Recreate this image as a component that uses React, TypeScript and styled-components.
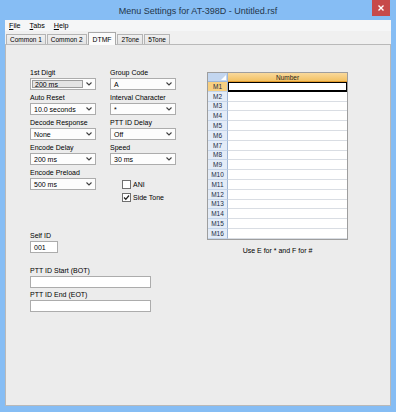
import React from "react";
import styled, { createGlobalStyle, css } from "styled-components";

const GlobalStyle = createGlobalStyle`
  html, body {
    margin: 0;
    padding: 0;
  }
  body {
    width: 396px;
    height: 412px;
    overflow: hidden;
    font-family: "Liberation Sans", Arial, sans-serif;
    color: #000;
  }
`;

const Window = styled.div`
  width: 396px;
  height: 412px;
  background: #86bdf4;
  display: flex;
  flex-direction: column;
`;

const TitleBar = styled.div`
  height: 20px;
  display: grid;
  grid-template-columns: 1fr auto 1fr;
  align-items: center;
  font-size: 9px;
  color: #24364a;
`;

const Title = styled.div`
  grid-column: 2;
  padding-top: 1px;
`;

const CloseButton = styled.div`
  grid-column: 3;
  justify-self: end;
  align-self: start;
  width: 18px;
  height: 16px;
  margin-right: 6px;
  background: #c74a4a;
  display: flex;
  align-items: center;
  justify-content: center;
`;

const Frame = styled.div`
  flex: 1;
  display: flex;
  flex-direction: column;
  padding: 0 5px 6px 5px;
  min-height: 0;
`;

const Client = styled.div`
  flex: 1;
  display: flex;
  flex-direction: column;
  background: #f0f0f0;
`;

const MenuBar = styled.div`
  height: 11px;
  display: flex;
  align-items: center;
  gap: 9px;
  padding-left: 4px;
  background: #f5f6f7;
  font-size: 7.2px;
`;

const MenuItem = styled.span`
  &::first-letter {
    text-decoration: underline;
  }
`;

const TabStrip = styled.div`
  height: 13px;
  display: flex;
  align-items: flex-end;
  gap: 1px;
  padding-left: 1px;
  background: #f0f0f0;
`;

const Tab = styled.div<{ $active?: boolean }>`
  height: 9px;
  padding: 0 3px;
  display: flex;
  align-items: center;
  font-size: 6.5px;
  border: 1px solid #b4b4b4;
  border-bottom: none;
  background: linear-gradient(#f0f0f0, #e3e3e3);
  ${(p) =>
    p.$active &&
    css`
      height: 12px;
      padding: 0 4px;
      background: #fbfbfb;
      position: relative;
      z-index: 1;
      margin-bottom: -1px;
      border-color: #a9a9a9;
      font-size: 6.8px;
    `}
`;

const Panel = styled.div`
  flex: 1;
  border: 1px solid #b9b9b9;
  background: #ececec;
  display: flex;
  align-items: flex-start;
  padding: 24px 0 0 24px;
`;

const FormColumn = styled.div`
  display: flex;
  flex-direction: column;
`;

const FieldGrid = styled.div`
  display: grid;
  grid-template-columns: 66px 66px;
  column-gap: 14px;
  row-gap: 4px;
  align-items: start;
`;

const Field = styled.div<{ $top?: number }>`
  display: flex;
  flex-direction: column;
  gap: 1px;
  margin-top: ${(p) => p.$top ?? 0}px;
`;

const Label = styled.div`
  font-size: 7px;
  line-height: 8px;
  white-space: nowrap;
`;

const Combo = styled.div`
  height: 12px;
  box-sizing: border-box;
  border: 1px solid #acacac;
  background: #fdfdfd;
  display: flex;
  align-items: stretch;
`;

const ComboText = styled.div<{ $focused?: boolean }>`
  flex: 1;
  display: flex;
  align-items: center;
  padding-left: 3px;
  font-size: 7px;
  white-space: nowrap;
  ${(p) =>
    p.$focused &&
    css`
      margin: 1px 0 1px 1px;
      padding-left: 2px;
      background: #e4e4e4;
      border: 1px solid #9c9c9c;
    `}
`;

const ComboArrow = styled.div`
  width: 12px;
  display: flex;
  align-items: center;
  justify-content: center;
`;

const TextBox = styled.div<{ $width: number }>`
  width: ${(p) => p.$width}px;
  height: 12px;
  box-sizing: border-box;
  border: 1px solid #acacac;
  background: #fff;
  font-size: 7px;
  display: flex;
  align-items: center;
  padding-left: 3px;
`;

const CheckGroup = styled.div`
  display: flex;
  flex-direction: column;
  gap: 4px;
  padding: 11px 0 0 12px;
`;

const CheckRow = styled.div`
  display: flex;
  align-items: center;
  gap: 2px;
  font-size: 7px;
`;

const CheckBox = styled.div`
  width: 9px;
  height: 9px;
  box-sizing: border-box;
  border: 1px solid #6f6f6f;
  background: #fff;
  display: flex;
  align-items: center;
  justify-content: center;
`;

const TableArea = styled.div`
  margin: 3px 0 0 31px;
  display: flex;
  flex-direction: column;
  align-items: center;
`;

const Table = styled.div`
  width: 141px;
  box-sizing: border-box;
  border: 1px solid #9e9e9e;
  display: grid;
  grid-template-columns: 20px 1fr;
  grid-template-rows: 9px;
  grid-auto-rows: 9.8px;
  background: #fff;
`;

const Corner = styled.div`
  background: #c3d6ef;
  border-right: 1px solid #9eb6d6;
  border-bottom: 1px solid #9eb6d6;
  display: flex;
  align-items: flex-end;
  justify-content: flex-end;
  padding: 0 1px 1px 0;
`;

const ColHeader = styled.div`
  background: linear-gradient(#f9d99c, #f2c163);
  border-bottom: 1px solid #e39b2c;
  font-size: 6.5px;
  display: flex;
  align-items: center;
  justify-content: center;
  color: #1c1c1c;
`;

const RowHeader = styled.div<{ $selected?: boolean }>`
  box-sizing: border-box;
  background: ${(p) => (p.$selected ? "#f7cf80" : "#e4ecf7")};
  border-right: 1px solid #9eb6d6;
  border-bottom: 1px solid #c5d5ea;
  font-size: 6.5px;
  color: #1b2b44;
  display: flex;
  align-items: center;
  justify-content: center;
`;

const Cell = styled.div<{ $selected?: boolean }>`
  box-sizing: border-box;
  border-bottom: 1px solid #d9dde3;
  ${(p) =>
    p.$selected &&
    css`
      border: 1px solid #000;
      border-bottom-width: 2px;
    `}
`;

const Hint = styled.div`
  margin-top: 7px;
  font-size: 7px;
  line-height: 8px;
`;

const Chevron = () => (
  <svg width="6" height="4" viewBox="0 0 6 4">
    <polyline points="0.5,0.5 3,3 5.5,0.5" fill="none" stroke="#404040" strokeWidth="1.1" />
  </svg>
);

const Dropdown = ({ label, value, focused }: { label: string; value: string; focused?: boolean }) => (
  <Field>
    <Label>{label}</Label>
    <Combo>
      <ComboText $focused={focused}>{value}</ComboText>
      <ComboArrow>
        <Chevron />
      </ComboArrow>
    </Combo>
  </Field>
);

const memories = Array.from({ length: 16 }, (_, i) => `M${i + 1}`);

const App: React.FC = () => {
  return (
    <>
      <GlobalStyle />
      <Window>
        <TitleBar>
          <Title>Menu Settings for AT-398D - Untitled.rsf</Title>
          <CloseButton>
            <svg width="6" height="6" viewBox="0 0 6 6">
              <path d="M0.5 0.5 L5.5 5.5 M5.5 0.5 L0.5 5.5" stroke="#fff" strokeWidth="1.4" />
            </svg>
          </CloseButton>
        </TitleBar>
        <Frame>
          <Client>
            <MenuBar>
              <MenuItem>File</MenuItem>
              <MenuItem>Tabs</MenuItem>
              <MenuItem>Help</MenuItem>
            </MenuBar>
            <TabStrip>
              <Tab>Common 1</Tab>
              <Tab>Common 2</Tab>
              <Tab $active>DTMF</Tab>
              <Tab>2Tone</Tab>
              <Tab>5Tone</Tab>
            </TabStrip>
            <Panel>
              <FormColumn>
                <FieldGrid>
                  <Dropdown label="1st Digit" value="200 ms" focused />
                  <Dropdown label="Group Code" value="A" />
                  <Dropdown label="Auto Reset" value="10.0 seconds" />
                  <Dropdown label="Interval Character" value="*" />
                  <Dropdown label="Decode Response" value="None" />
                  <Dropdown label="PTT ID Delay" value="Off" />
                  <Dropdown label="Encode Delay" value="200 ms" />
                  <Dropdown label="Speed" value="30 ms" />
                  <Dropdown label="Encode Preload" value="500 ms" />
                  <CheckGroup>
                    <CheckRow>
                      <CheckBox />
                      ANI
                    </CheckRow>
                    <CheckRow>
                      <CheckBox>
                        <svg width="7" height="7" viewBox="0 0 7 7">
                          <polyline points="1,3.5 2.8,5.3 6,1.5" fill="none" stroke="#222" strokeWidth="1.3" />
                        </svg>
                      </CheckBox>
                      Side Tone
                    </CheckRow>
                  </CheckGroup>
                </FieldGrid>
                <Field $top={30}>
                  <Label>Self ID</Label>
                  <TextBox $width={28}>001</TextBox>
                </Field>
                <Field $top={14}>
                  <Label>PTT ID Start (BOT)</Label>
                  <TextBox $width={121} />
                </Field>
                <Field $top={3}>
                  <Label>PTT ID End (EOT)</Label>
                  <TextBox $width={121} />
                </Field>
              </FormColumn>
              <TableArea>
                <Table>
                  <Corner>
                    <svg width="5" height="5" viewBox="0 0 5 5">
                      <polygon points="5,0 5,5 0,5" fill="#fff" />
                    </svg>
                  </Corner>
                  <ColHeader>Number</ColHeader>
                  {memories.map((m, i) => (
                    <React.Fragment key={m}>
                      <RowHeader $selected={i === 0}>{m}</RowHeader>
                      <Cell $selected={i === 0} />
                    </React.Fragment>
                  ))}
                </Table>
                <Hint>Use E for * and F for #</Hint>
              </TableArea>
            </Panel>
          </Client>
        </Frame>
      </Window>
    </>
  );
};

export default App;
